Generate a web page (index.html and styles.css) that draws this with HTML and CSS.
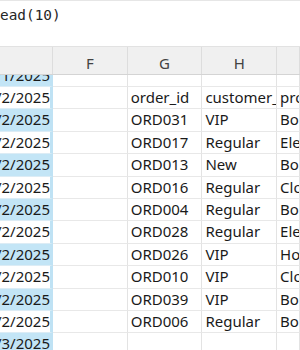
FILE: index.html
```html
<!DOCTYPE html>
<html>
<head>
<meta charset="utf-8">
<link rel="stylesheet" href="styles.css">
</head>
<body>
<div class="formula"><span class="code">ead(10)</span></div>
<div class="colhead">
  <div class="hc"></div>
  <div class="hc">F</div>
  <div class="hc">G</div>
  <div class="hc">H</div>
  <div class="hc"></div>
</div>
<div class="grid-wrap">
  <div class="grid">
    <div class="row first"><div class="c d band">7/1/2025</div><div class="c"></div><div class="c"></div><div class="c"></div><div class="c"></div></div>
    <div class="row"><div class="c d">7/2/2025</div><div class="c"></div><div class="c">order_id</div><div class="c">customer_type</div><div class="c">product_category</div></div>
    <div class="row"><div class="c d band">7/2/2025</div><div class="c"></div><div class="c">ORD031</div><div class="c">VIP</div><div class="c">Books</div></div>
    <div class="row"><div class="c d">7/2/2025</div><div class="c"></div><div class="c">ORD017</div><div class="c">Regular</div><div class="c">Electronics</div></div>
    <div class="row"><div class="c d band">7/2/2025</div><div class="c"></div><div class="c">ORD013</div><div class="c">New</div><div class="c">Books</div></div>
    <div class="row"><div class="c d">7/2/2025</div><div class="c"></div><div class="c">ORD016</div><div class="c">Regular</div><div class="c">Clothing</div></div>
    <div class="row"><div class="c d band">7/2/2025</div><div class="c"></div><div class="c">ORD004</div><div class="c">Regular</div><div class="c">Books</div></div>
    <div class="row"><div class="c d">7/2/2025</div><div class="c"></div><div class="c">ORD028</div><div class="c">Regular</div><div class="c">Electronics</div></div>
    <div class="row"><div class="c d band">7/2/2025</div><div class="c"></div><div class="c">ORD026</div><div class="c">VIP</div><div class="c">Home</div></div>
    <div class="row"><div class="c d">7/2/2025</div><div class="c"></div><div class="c">ORD010</div><div class="c">VIP</div><div class="c">Clothing</div></div>
    <div class="row"><div class="c d band">7/2/2025</div><div class="c"></div><div class="c">ORD039</div><div class="c">VIP</div><div class="c">Books</div></div>
    <div class="row"><div class="c d">7/2/2025</div><div class="c"></div><div class="c">ORD006</div><div class="c">Regular</div><div class="c">Books</div></div>
    <div class="row"><div class="c d band">7/3/2025</div><div class="c"></div><div class="c"></div><div class="c"></div><div class="c"></div></div>
  </div>
</div>
</body>
</html>
```
FILE: styles.css
```css
html, body {
  margin: 0;
  padding: 0;
  width: 300px;
  height: 350px;
  overflow: hidden;
  background: #ffffff;
}

.formula {
  height: 46px;
  box-sizing: border-box;
  border-top: 1px solid #e6e6e6;
  padding-top: 6px;
  font-family: "DejaVu Sans Mono", "Liberation Mono", monospace;
  font-size: 14.4px;
  line-height: 17px;
  color: #262626;
  white-space: nowrap;
  overflow: hidden;
}

.colhead {
  display: grid;
  grid-template-columns: 53px 74.7px 74.7px 74.7px 1fr;
  height: 29px;
  box-sizing: border-box;
  background: #f0f0f0;
  border-top: 1px solid #e2e2e2;
  border-bottom: 1px solid #d4d4d4;
  font-family: "Noto Sans", sans-serif;
  font-size: 15px;
  color: #424242;
}

.hc {
  display: flex;
  align-items: center;
  justify-content: center;
  border-right: 1px solid #dddddd;
  padding-top: 4px;
}

.grid-wrap {
  height: 275px;
  overflow: hidden;
}

.row {
  display: grid;
  grid-template-columns: 53px 74.7px 74.7px 74.7px 1fr;
  height: 22.4px;
}

.row.first {
  margin-top: -10.4px;
}

.c {
  box-sizing: border-box;
  border-right: 1px solid #e3e3e3;
  border-bottom: 1px solid #e8e8e8;
  font-family: "Noto Sans", sans-serif;
  font-size: 15px;
  line-height: 21.4px;
  color: #1a1a1a;
  white-space: nowrap;
  overflow: hidden;
  padding-left: 3px;
}

.c.d {
  display: flex;
  justify-content: flex-end;
  padding-left: 0;
  padding-right: 0;
  border-right: 3px solid #bfe2f4;
  border-bottom: 1px solid #dcecf5;
  background: #ffffff;
}

.c.d.band {
  background: #c3e5f6;
}
```
